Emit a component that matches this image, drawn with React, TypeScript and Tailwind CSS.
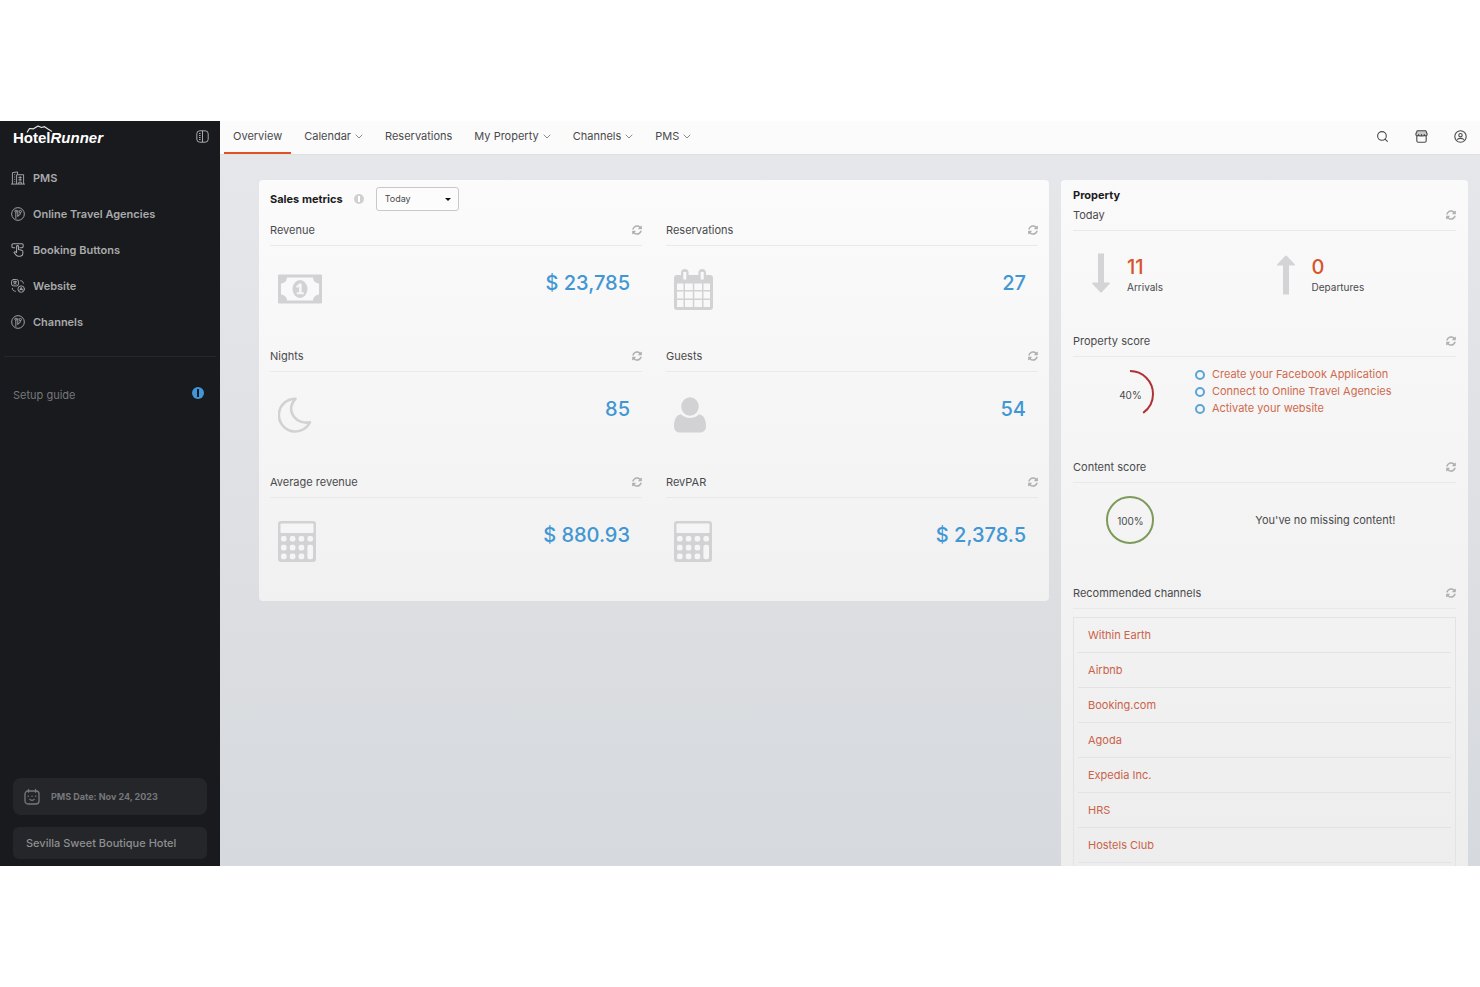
import React, { useState } from 'react';
import { Search } from 'lucide-react';
import { FaSyncAlt } from 'react-icons/fa';

type IconProps = { className?: string };

const BuildingIcon = ({ className }: IconProps) => (
  <svg className={className} viewBox="0 0 15 15" fill="none" stroke="currentColor" strokeWidth="1" aria-hidden="true">
    <path d="M0 14h15M1.500 14V1.800L7 1v2.500M3.500 4h1M3.500 6.500h1M3.500 9h1M3.500 11.500h1M6 14V4h7.500v10" />
    <path d="M8 7h3.500M8 9.500h3.500M9.800 5.500v5M8.300 14v-2h2.700v2" />
  </svg>
);

const ChannelIcon = ({ className }: IconProps) => (
  <svg className={className} viewBox="0 0 15 15" fill="none" stroke="currentColor" strokeWidth="1" aria-hidden="true">
    <circle cx="7.500" cy="7.500" r="6.800" />
    <circle cx="5.200" cy="4.500" r="1.100" />
    <circle cx="10" cy="4.900" r="1.200" />
    <path d="M5.200 5.600v7M7.300 3.400v7.200M10 6.100c0 2.400-1.200 3-2.700 3.200" />
  </svg>
);

const ButtonsIcon = ({ className }: IconProps) => (
  <svg className={className} viewBox="0 0 15 15" fill="none" stroke="currentColor" strokeWidth="1.100" strokeLinecap="round" strokeLinejoin="round" aria-hidden="true">
    <path d="M4 5H2.200C1.500 5 1 4.500 1 3.800V2C1 1.300 1.500.8 2.200.8h9.600c.7 0 1.200.5 1.200 1.200v1.800c0 .7-.5 1.200-1.200 1.200H9.500" />
    <path d="M6 10.200V3.800a1 1 0 0 1 2 0V7l3.500.7c.8.2 1.200.7 1.200 1.400v1.700c0 2-1.200 3.400-3.200 3.400H8c-1.200 0-1.800-.5-2.500-1.300L3.200 10.200c.6-1 1.600-.9 2.800 0z" />
  </svg>
);

const WebsiteIcon = ({ className }: IconProps) => (
  <svg className={className} viewBox="0 0 15 15" fill="none" stroke="currentColor" strokeWidth="1" strokeLinecap="round" aria-hidden="true">
    <rect x="0.600" y="0.600" width="7.400" height="6.800" rx="2" />
    <circle cx="10.900" cy="10.800" r="3.500" />
    <path d="M2.500 3h3.600M4.300 2.200V3M3 5.500c1.200-.4 2-1.200 2.300-2.500M3.400 4c.5.800 1.200 1.300 2.200 1.500M9.500 12l1.400-3 1.400 3M10 11.200h1.900" />
    <path d="M10.300 1.800c1.700.1 2.700 1 2.900 2.700M1.400 10c.2 2 1.300 3 3.300 3.200" />
  </svg>
);

const PmsDateIcon = ({ className }: IconProps) => (
  <svg className={className} viewBox="0 0 16 16" fill="none" stroke="currentColor" strokeWidth="1.300" strokeLinecap="round" aria-hidden="true">
    <rect x="1" y="2" width="14" height="13" rx="3" />
    <path d="M4.500.6v2.600M11.500.6v2.600M5.800 10.400c1 1.200 3.400 1.200 4.400 0" />
    <path d="M4.200 7.200h.3M7.900 7.200h.2M11.500 7.200h.3" />
  </svg>
);

const PanelIcon = ({ className }: IconProps) => (
  <svg className={className} viewBox="0 0 13 13" fill="none" stroke="currentColor" strokeWidth="1" aria-hidden="true">
    <rect x="0.800" y="0.800" width="11.400" height="11.400" rx="3" />
    <path d="M6.500.8v11.400M3 3.500h1.600M3 5.500h1.600M3 7.500h1.600M3 9.500h1.600" />
  </svg>
);

const StoreIcon = ({ className }: IconProps) => (
  <svg className={className} viewBox="0 0 13 13" fill="none" stroke="currentColor" strokeWidth="1.100" strokeLinejoin="round" aria-hidden="true">
    <path d="M2.200.8h8.600l1.400 3.200c0 2.200-2.600 2.400-2.900.6-.2 1.900-2.700 1.900-2.800 0-.1 1.900-2.600 1.900-2.800 0C3.400 6.400.8 6.200.8 4z" fill="#c9c9cc" />
    <path d="M1.800 6v4.700c0 .9.5 1.500 1.500 1.500h6.400c1 0 1.500-.6 1.500-1.500V6" />
  </svg>
);

const UserIcon = ({ className }: IconProps) => (
  <svg className={className} viewBox="0 0 13 13" fill="none" stroke="currentColor" strokeWidth="1.100" aria-hidden="true">
    <circle cx="6.500" cy="6.500" r="5.700" />
    <circle cx="6.500" cy="5.200" r="1.700" />
    <path d="M3.200 9.700c.5-1.200 1.700-1.300 3.300-1.300s2.800.1 3.300 1.300" />
  </svg>
);

const CaretIcon = ({ className }: IconProps) => (
  <svg className={className} viewBox="0 0 8 5" fill="none" stroke="currentColor" strokeWidth="1" strokeLinecap="round" strokeLinejoin="round" aria-hidden="true">
    <path d="M1 1l3 3 3-3" />
  </svg>
);

const MoneyIcon = () => (
  <svg className="h-[30px] w-11" viewBox="0 0 44 30" aria-hidden="true">
    <path fill="currentColor" fillRule="evenodd" d="M1 0.500h42a1 1 0 0 1 1 1v27a1 1 0 0 1-1 1H1a1 1 0 0 1-1-1v-27a1 1 0 0 1 1-1zM9 3.500a6 6 0 0 1-6 6v11a6 6 0 0 1 6 6h26a6 6 0 0 1 6-6v-11a6 6 0 0 1-6-6z" />
    <ellipse cx="22" cy="15" rx="7.500" ry="9" fill="currentColor" />
    <path fill="#f7f7f7" d="M21.200 9.500h2.400v8.700h2.200v2h-7v-2h2.300v-5.600l-2 1.300-1.100-1.500z" />
  </svg>
);

const CalendarIcon = () => (
  <svg className="h-[41px] w-[39px]" viewBox="0 0 39 41" aria-hidden="true">
    <path fill="currentColor" fillRule="evenodd" d="M3 6h4V3.800a3.800 3.800 0 0 1 7.600 0V6h9.800V3.800a3.800 3.800 0 0 1 7.600 0V6h4a3 3 0 0 1 3 3v29a3 3 0 0 1-3 3H3a3 3 0 0 1-3-3V9a3 3 0 0 1 3-3zM9.300 3v7.500h3V3zM26.700 3v7.500h3V3zM3 14.500v6.500h6.500v-6.500zM11 14.500v6.500h7.800v-6.500zM20.300 14.500v6.500h7.700v-6.500zM29.500 14.500v6.500H36v-6.500zM3 22.500v7h6.500v-7zM11 22.500v7h7.800v-7zM20.300 22.500v7h7.700v-7zM29.500 22.500v7H36v-7zM3 31v7h6.500v-7zM11 31v7h7.800v-7zM20.300 31v7h7.700v-7zM29.500 31v7H36v-7z" />
  </svg>
);

const MoonIcon = () => (
  <svg className="h-9 w-[34px]" viewBox="0 0 34 36" fill="none" stroke="currentColor" strokeWidth="2.600" strokeLinejoin="round" aria-hidden="true">
    <path d="M17.500 1.700A16.400 16.400 0 1 0 32 25.300C19 28 6.500 15 17.500 1.700z" />
  </svg>
);

const GuestIcon = () => (
  <svg className="h-9 w-8" viewBox="0 0 32 36" fill="currentColor" aria-hidden="true">
    <ellipse cx="16" cy="9.500" rx="8.800" ry="9.200" />
    <path d="M7 17.200c2.500 2.500 5.500 3.700 9 3.700s6.500-1.200 9-3.700c4.700.5 7 5.500 7 11.800 0 4.300-2.200 6.500-6 6.500H6c-3.800 0-6-2.200-6-6.500 0-6.300 2.300-11.300 7-11.800z" />
  </svg>
);

const CalculatorIcon = () => (
  <svg className="h-[41px] w-[38px]" viewBox="0 0 38 41" aria-hidden="true">
    <path fill="currentColor" d="M3 0h32a3 3 0 0 1 3 3v35a3 3 0 0 1-3 3H3a3 3 0 0 1-3-3V3a3 3 0 0 1 3-3z" />
    <g fill="#f5f5f5">
      <rect x="2.500" y="2.500" width="33" height="9.500" rx="1" />
      <rect x="3" y="15" width="5.600" height="5.600" rx="2" />
      <rect x="11.800" y="15" width="5.600" height="5.600" rx="2" />
      <rect x="20.600" y="15" width="5.600" height="5.600" rx="2" />
      <rect x="29.400" y="15" width="5.600" height="5.600" rx="2" />
      <rect x="3" y="23.800" width="5.600" height="5.600" rx="2" />
      <rect x="11.800" y="23.800" width="5.600" height="5.600" rx="2" />
      <rect x="20.600" y="23.800" width="5.600" height="5.600" rx="2" />
      <rect x="29.400" y="23.800" width="5.600" height="14.400" rx="2" />
      <rect x="3" y="32.600" width="5.600" height="5.600" rx="2" />
      <rect x="11.800" y="32.600" width="5.600" height="5.600" rx="2" />
      <rect x="20.600" y="32.600" width="5.600" height="5.600" rx="2" />
    </g>
  </svg>
);

const ArrowIcon = ({ className }: IconProps) => (
  <svg className={className} viewBox="0 0 18 40" fill="currentColor" aria-hidden="true">
    <path d="M6 .5h6v29h5.200c.8 0 1 .6.500 1.200L10 39c-.6.700-1.400.7-2 0L.3 30.700c-.5-.6-.3-1.200.5-1.200H6z" />
  </svg>
);

const sidebarItems = [
  { label: 'PMS', icon: BuildingIcon },
  { label: 'Online Travel Agencies', icon: ChannelIcon },
  { label: 'Booking Buttons', icon: ButtonsIcon },
  { label: 'Website', icon: WebsiteIcon },
  { label: 'Channels', icon: ChannelIcon },
];

const navItems = [
  { label: 'Overview', menu: false },
  { label: 'Calendar', menu: true },
  { label: 'Reservations', menu: false },
  { label: 'My Property', menu: true },
  { label: 'Channels', menu: true },
  { label: 'PMS', menu: true },
];

const metrics = [
  { label: 'Revenue', value: '$ 23,785', icon: MoneyIcon },
  { label: 'Reservations', value: '27', icon: CalendarIcon },
  { label: 'Nights', value: '85', icon: MoonIcon },
  { label: 'Guests', value: '54', icon: GuestIcon },
  { label: 'Average revenue', value: '$ 880.93', icon: CalculatorIcon },
  { label: 'RevPAR', value: '$ 2,378.5', icon: CalculatorIcon },
];

const todos = ['Create your Facebook Application', 'Connect to Online Travel Agencies', 'Activate your website'];

const channels = ['Within Earth', 'Airbnb', 'Booking.com', 'Agoda', 'Expedia Inc.', 'HRS', 'Hostels Club'];

const SectionHeader = ({ title }: { title: string }) => (
  <div className="flex h-[31px] items-center justify-between border-b border-[#e9e9eb]">
    <h3>{title}</h3>
    <button type="button" aria-label={`Refresh ${title}`} className="text-[#b0b0b0]">
      <FaSyncAlt className="h-[10px] w-[10px]" />
    </button>
  </div>
);

const ScoreRing = ({ percent, color }: { percent: number; color: string }) => {
  const length = 2 * Math.PI * 23;
  return (
    <div className="grid h-[50px] w-[50px] place-items-center">
      <svg className="col-start-1 row-start-1 h-[50px] w-[50px] -rotate-90" viewBox="0 0 50 50" fill="none" aria-hidden="true">
        <circle cx="25" cy="25" r="23" stroke={color} strokeWidth="2" strokeDasharray={`${(length * percent) / 100} ${length}`} />
      </svg>
      <span className="col-start-1 row-start-1 pt-0.5 text-[10px]">{percent}%</span>
    </div>
  );
};

const Sidebar = () => (
  <aside className="flex w-[220px] shrink-0 flex-col bg-[#191a1d] text-[#a9aaac]">
    <div className="flex h-[34px] shrink-0 items-center justify-between pl-[13px] pr-[11px]">
      <a href="#" className="relative font-['Liberation_Sans',sans-serif] text-[15px] font-bold text-white">
        <svg className="absolute -top-0.5 left-[13px] h-2 w-[27px]" viewBox="0 0 27 8" fill="none" stroke="#e8e8e8" strokeWidth="1.200" strokeLinejoin="round" aria-hidden="true">
          <path d="M1 7.500l2.500-4 4 .3L12 1l3.500 1.500 3-.8L22 4l4 2.500" />
        </svg>
        Hotel<i>Runner</i>
      </a>
      <button type="button" aria-label="Collapse sidebar" className="pb-1">
        <PanelIcon className="h-[13px] w-[13px]" />
      </button>
    </div>

    <nav className="pt-[5px] text-[11px] font-semibold">
      {sidebarItems.map(({ label, icon: Icon }) => (
        <a key={label} href="#" className="flex h-9 items-center gap-2 px-[11px]">
          <Icon className="h-[14px] w-[14px]" />
          {label}
        </a>
      ))}
    </nav>

    <hr className="mx-1 mt-4 border-[#26272a]" />
    <a href="#" className="mt-5 flex h-9 items-center justify-between pl-[13px] pr-4 text-[11px] text-[#77787b]">
      Setup guide
      <span className="mb-1 flex h-3 w-3 items-center justify-center rounded-full bg-[#4096d8]">
        <span className="h-2 w-0.5 bg-[#191a1d]" />
      </span>
    </a>

    <div className="mt-auto flex flex-col gap-3 px-[13px] pb-[7px]">
      <button type="button" className="flex h-[37px] items-center gap-[11px] rounded-lg bg-[#252629] px-[11px] text-[9px] font-bold text-[#77787b]">
        <PmsDateIcon className="h-4 w-4" />
        PMS Date: Nov 24, 2023
      </button>
      <button type="button" className="flex h-8 items-center rounded-md bg-[#252629] px-[13px] text-[11px] font-medium text-[#8e8f91]">
        Sevilla Sweet Boutique Hotel
      </button>
    </div>
  </aside>
);

const TopBar = () => (
  <header className="flex h-[34px] shrink-0 items-stretch justify-between border-b border-[#e0e0e2] bg-[#fbfbfb] pl-1 pr-[13px] text-[#4a4a4c]">
    <nav className="flex gap-1">
      {navItems.map(({ label, menu }) => (
        <a
          key={label}
          href="#"
          className={`flex items-center gap-1 border-y-2 border-t-transparent px-[9px] pb-[3px] ${label === 'Overview' ? 'border-b-[#dd5424]' : 'border-b-transparent'}`}
        >
          {label}
          {menu && <CaretIcon className="h-[5px] w-2 text-[#8a8a8c]" />}
        </a>
      ))}
    </nav>
    <div className="flex items-center gap-[26px] pb-0.5">
      <button type="button" aria-label="Search"><Search className="h-[13px] w-[13px]" /></button>
      <button type="button" aria-label="Marketplace"><StoreIcon className="h-[13px] w-[13px]" /></button>
      <button type="button" aria-label="Account"><UserIcon className="h-[13px] w-[13px]" /></button>
    </div>
  </header>
);

const SalesMetrics = () => {
  const [period, setPeriod] = useState('Today');

  return (
    <section className="rounded-sm bg-linear-to-b from-[#fbfbfc] to-[#f1f1f1] px-[11px] pb-2 pt-[7px]">
      <div className="mb-1 flex h-6 items-center">
        <h2 className="text-[11px] font-bold text-[#1c1c1e]">
          <label htmlFor="period">Sales metrics</label>
        </h2>
        <span className="ml-[11px] flex h-[10px] w-[10px] items-center justify-center rounded-full bg-[#d0d0d2]">
          <span className="h-1.5 w-0.5 bg-white" />
        </span>
        <div className="relative ml-3">
          <select
            id="period"
            value={period}
            onChange={(e) => setPeriod(e.target.value)}
            className="block h-6 w-[83px] appearance-none rounded-[3px] border border-[#c9c9cb] bg-[#fcfcfc] px-2 text-[9px] text-[#4a4a4c]"
          >
            <option>Today</option>
            <option>Yesterday</option>
            <option>This week</option>
          </select>
          <svg className="pointer-events-none absolute right-2 top-[11px] h-[3px] w-1.5" viewBox="0 0 6 3" aria-hidden="true">
            <path d="M0 0h6L3 3z" fill="#111" />
          </svg>
        </div>
      </div>

      <div className="grid grid-cols-2 gap-x-6">
        {metrics.map(({ label, value, icon: Icon }) => (
          <article key={label} className="h-[126px]">
            <SectionHeader title={label} />
            <div className="flex justify-between pl-2 pr-3">
              <div className="flex h-[86px] items-center text-[#d2d2d4]">
                <Icon />
              </div>
              <p className="pt-[23px] text-xl font-medium leading-7 text-[#4197d3]">{value}</p>
            </div>
          </article>
        ))}
      </div>
    </section>
  );
};

const PropertyPanel = () => (
  <section className="rounded-sm bg-linear-to-b from-[#fafafa] to-[#ededed] px-3 pb-3 pt-[10px]">
    <h2 className="text-[11px] font-bold leading-[10px] text-[#1c1c1e]">Property</h2>

    <div className="h-[126px]">
      <SectionHeader title="Today" />
      <div className="grid grid-cols-2 pt-[22px]">
        <div className="flex gap-[17px] pl-[19px]">
          <ArrowIcon className="h-10 w-[18px] text-[#d4d4d6]" />
          <div>
            <p className="text-xl font-medium leading-7 text-[#d9532a]">11</p>
            <p className="text-[10px] leading-3">Arrivals</p>
          </div>
        </div>
        <div className="flex gap-[17px] pl-3">
          <ArrowIcon className="mt-0.5 h-10 w-[18px] rotate-180 text-[#d4d4d6]" />
          <div>
            <p className="text-xl font-medium leading-7 text-[#d9532a]">0</p>
            <p className="text-[10px] leading-3">Departures</p>
          </div>
        </div>
      </div>
    </div>

    <div className="h-[126px]">
      <SectionHeader title="Property score" />
      <div className="flex">
        <div className="flex w-[30%] justify-center pt-3">
          <ScoreRing percent={40} color="#b03036" />
        </div>
        <ul className="flex-1 pl-[7px] pt-[9px] leading-[17px] text-[#cf6a4e]">
          {todos.map((todo) => (
            <li key={todo} className="flex items-center gap-[7px]">
              <span className="h-[10px] w-[10px] rounded-full border-2 border-[#5aa5d8]" />
              <a href="#">{todo}</a>
            </li>
          ))}
        </ul>
      </div>
    </div>

    <div className="h-[126px]">
      <SectionHeader title="Content score" />
      <div className="flex items-center pt-3">
        <div className="flex w-[30%] justify-center">
          <ScoreRing percent={100} color="#7d9a5a" />
        </div>
        <p className="flex-1 pl-[7px] text-center">You've no missing content!</p>
      </div>
    </div>

    <SectionHeader title="Recommended channels" />
    <ul className="mt-2 border border-b-0 border-[#e3e3e5] pb-2">
      {channels.map((channel) => (
        <li key={channel} className="mx-1 h-[35px] border-b border-[#e3e3e5] pl-[10px] leading-[35px]">
          <a href="#" className="text-[#c9634a]">{channel}</a>
        </li>
      ))}
    </ul>
  </section>
);

const App = () => {
  return (
    <div className="min-h-screen bg-white py-[121px] font-['Inter',sans-serif] text-[11px] text-[#4a4a4c]">
      <div className="flex h-[calc(100vh-242px)] overflow-hidden">
        <Sidebar />
        <div className="flex min-w-0 flex-1 flex-col">
          <TopBar />
          <main className="grid min-h-0 flex-1 grid-cols-[minmax(0,1fr)_407px] items-start gap-3 overflow-hidden bg-linear-to-b from-[#e6e7ea] to-[#d6d9dd] pl-[39px] pr-3 pt-[25px]">
            <SalesMetrics />
            <PropertyPanel />
          </main>
        </div>
      </div>
    </div>
  );
};

export default App;
